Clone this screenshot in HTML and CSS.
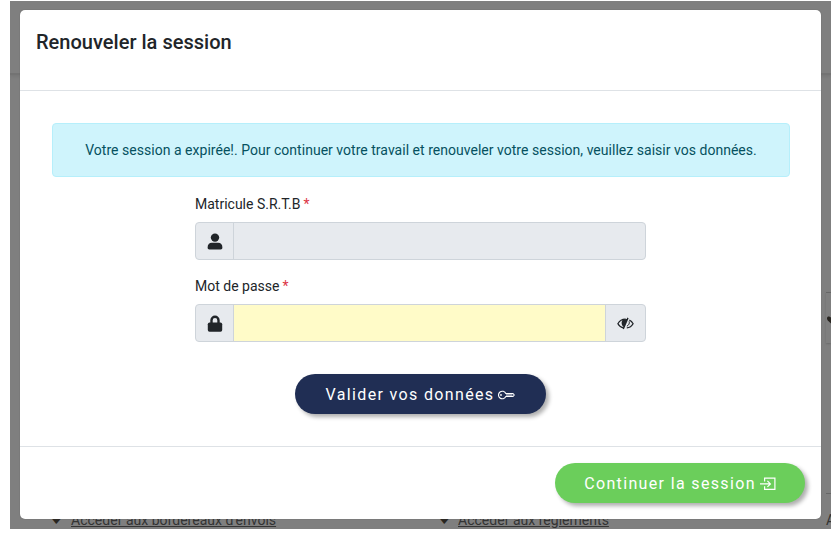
FILE: index.html
```html
<!DOCTYPE html>
<html lang="fr">
<head>
<meta charset="utf-8">
<title>Renouveler la session</title>
<link rel="stylesheet" href="styles.css">
</head>
<body>
<div class="page">
  <div class="topbar"></div>
  <div class="side">
    <div class="side-card"><svg width="4" height="8" viewBox="0 0 4 8"><path fill="#282520" d="M0 2.500C0 .8 1.300.2 2.600.7L4 1.500V7.500L.8 4.500Q0 3.700 0 2.500z"/></svg></div>
    <div class="side-next"></div>
  </div>
  <div class="links">
    <span class="bullet">♥</span><a>Accéder aux bordereaux d'envois</a>
    <span class="bullet">♥</span><a>Accéder aux règlements</a>
    <b class="last">A</b>
  </div>

  <section class="modal">
    <header class="modal-header"><h1>Renouveler la session</h1></header>
    <div class="modal-body">
      <div class="alert"><span>Votre session a expirée!. Pour continuer votre travail et renouveler votre session, veuillez saisir vos données.</span></div>
      <form class="form">
        <label><span>Matricule S.R.T.B</span><i>*</i></label>
        <div class="group">
          <div class="addon"><svg width="16" height="17" viewBox="0 0 16 17"><circle cx="8" cy="4.600" r="4.200" fill="currentColor"/><path fill="currentColor" d="M.6 14.600C.6 11.500 2.200 9.800 4.800 9.800h6.400c2.600 0 4.200 1.700 4.200 4.800 0 1.200-.6 1.900-1.800 1.900H2.400C1.200 16.500.6 15.800.6 14.600z"/></svg></div>
          <div class="field"></div>
        </div>
        <label><span>Mot de passe</span><i>*</i></label>
        <div class="group">
          <div class="addon"><svg width="16" height="17" viewBox="0 0 16 17"><path fill="none" stroke="currentColor" stroke-width="2.400" d="M4.500 9V5.200a3.500 3.500 0 0 1 7 0V9"/><rect x=".8" y="7.500" width="14.400" height="9.300" rx="1.700" fill="currentColor"/></svg></div>
          <div class="field filled"></div>
          <div class="addon toggle"><svg width="17" height="13" viewBox="0 0 17 13"><path fill="none" stroke="currentColor" stroke-width="1.300" d="M6.500 10.800C4 10.400 2.200 9 .9 6.700 2.800 3.400 5.500 2.100 8.700 2.200M12.300 3c1.700.8 2.900 2 3.800 3.700-1.400 2.500-3.400 3.900-6.300 4.100"/><path fill="currentColor" d="M10.400.6 11.600 1.200 6.900 12.300 5.700 11.700 6.400 9.800C4.300 8 4 4.700 6 2.500L9.700 2z"/><path fill="none" stroke="currentColor" stroke-width="1" d="M12.100 4.300c.7 2-.2 3.900-2.200 4.900"/></svg></div>
        </div>
        <button type="button" class="btn navy"><span>Valider vos données</span><svg width="17" height="10" viewBox="0 0 17 10"><path fill="none" stroke="currentColor" stroke-width="1.100" stroke-linejoin="round" d="M7.800 3.500H15L16.300 5 15 6.500H7.800A3.800 3.800 0 1 1 7.800 3.500zM8 5h6.500"/><circle cx="3" cy="5" r=".9" fill="currentColor"/></svg></button>
      </form>
    </div>
    <footer class="modal-footer"><button type="button" class="btn green"><span>Continuer la session</span><svg width="16" height="14" viewBox="0 0 16 14"><path fill="none" stroke="currentColor" stroke-width="1.200" d="M4.600 4.500V1.100h10.300v11.300H4.600V9.300M0 6.900h10M7.400 3.900l3 3-3 3"/></svg></button></footer>
  </section>
</div>
</body>
</html>
```
FILE: styles.css
```css
* { box-sizing: border-box; }
body { margin: 0; background: #fff; font-family: Roboto, "Liberation Sans", sans-serif; color: #212529; }
.page { position: relative; width: 821px; height: 528px; margin: 1px 0 0 10px; background: #7f7f7f; overflow: hidden; display: flex; flex-direction: column; }
.topbar { height: 74px; flex: none; border-bottom: 2px solid #737373; box-shadow: 0 1px 3px #747474; }
.side { flex: 1; align-self: flex-end; width: 5px; padding-top: 217px; }
.side-card { height: 51px; border-top: 1px solid #666; box-shadow: 0 1px 2px #6b6b6b; padding: 23px 0 0 1px; }
.side-card svg { display: block; }
.side-next { margin-top: 150px; border-top: 1px solid #666; }
.bullet { font: 14px/16px "DejaVu Sans", sans-serif; color: #282520; }
.links { height: 18px; flex: none; display: grid; grid-template-columns: 21px 367px 20px 368px auto; padding-left: 40px; font-size: 14px; line-height: 19px; letter-spacing: .02px; color: #333; }
.links a { text-decoration: underline; text-underline-offset: 1px; justify-self: start; }
.last { font-weight: 400; }
.modal { position: absolute; left: 10px; top: 9px; width: 801px; height: 509px; background: #fff; border-radius: 5px; display: flex; flex-direction: column; box-shadow: 0 0 1px #555; }
.modal-header { height: 81px; flex: none; padding: 20px 16px; border-bottom: 1px solid #dee2e6; }
h1 { margin: 0; font-size: 20px; line-height: 25px; font-weight: 500; letter-spacing: .02px; }
.modal-body { flex: 1; padding: 32px 32px 0; }
.alert { width: 738px; height: 54px; border: 1px solid #b6effb; border-radius: 4px; background: #cff4fc; color: #055160; display: flex; align-items: center; justify-content: center; font-size: 14px; letter-spacing: .025px; white-space: nowrap; }
.form { width: 451px; margin: 14px 0 0 143px; display: flex; flex-direction: column; }
label { font-size: 14px; line-height: 26px; height: 31px; display: flex; gap: 3px; }
label i { color: #dc3545; font-style: normal; }
.group { display: flex; height: 38px; margin-bottom: 13px; border: 1px solid #ced4da; border-radius: 4px; background: #e7eaee; overflow: hidden; }
.addon { width: 38px; flex: none; display: flex; align-items: center; justify-content: center; border-right: 1px solid #ced4da; }
.toggle { width: 40px; border-right: 0; border-left: 1px solid #ced4da; }
.field { flex: 1; }
.filled { background: #fffbc8; }
.btn { height: 40px; border: 0; border-radius: 20px; font: 400 16px/38px Roboto, sans-serif; letter-spacing: 1.35px; color: #fff; padding: 0; white-space: nowrap; display: flex; align-items: center; justify-content: center; gap: 4px; box-shadow: 3px 3px 4px rgba(0,0,0,.32); }
.btn span { padding-top: 2px; }
.navy { width: 251px; margin: 19px 0 0 100px; background: #202e54; }
.green { width: 250px; background: #6bce5b; }
.btn svg { margin-top: 2px; }
.modal-footer { height: 73px; flex: none; border-top: 1px solid #dee2e6; padding: 16px 16px 0; display: flex; justify-content: flex-end; }
```
